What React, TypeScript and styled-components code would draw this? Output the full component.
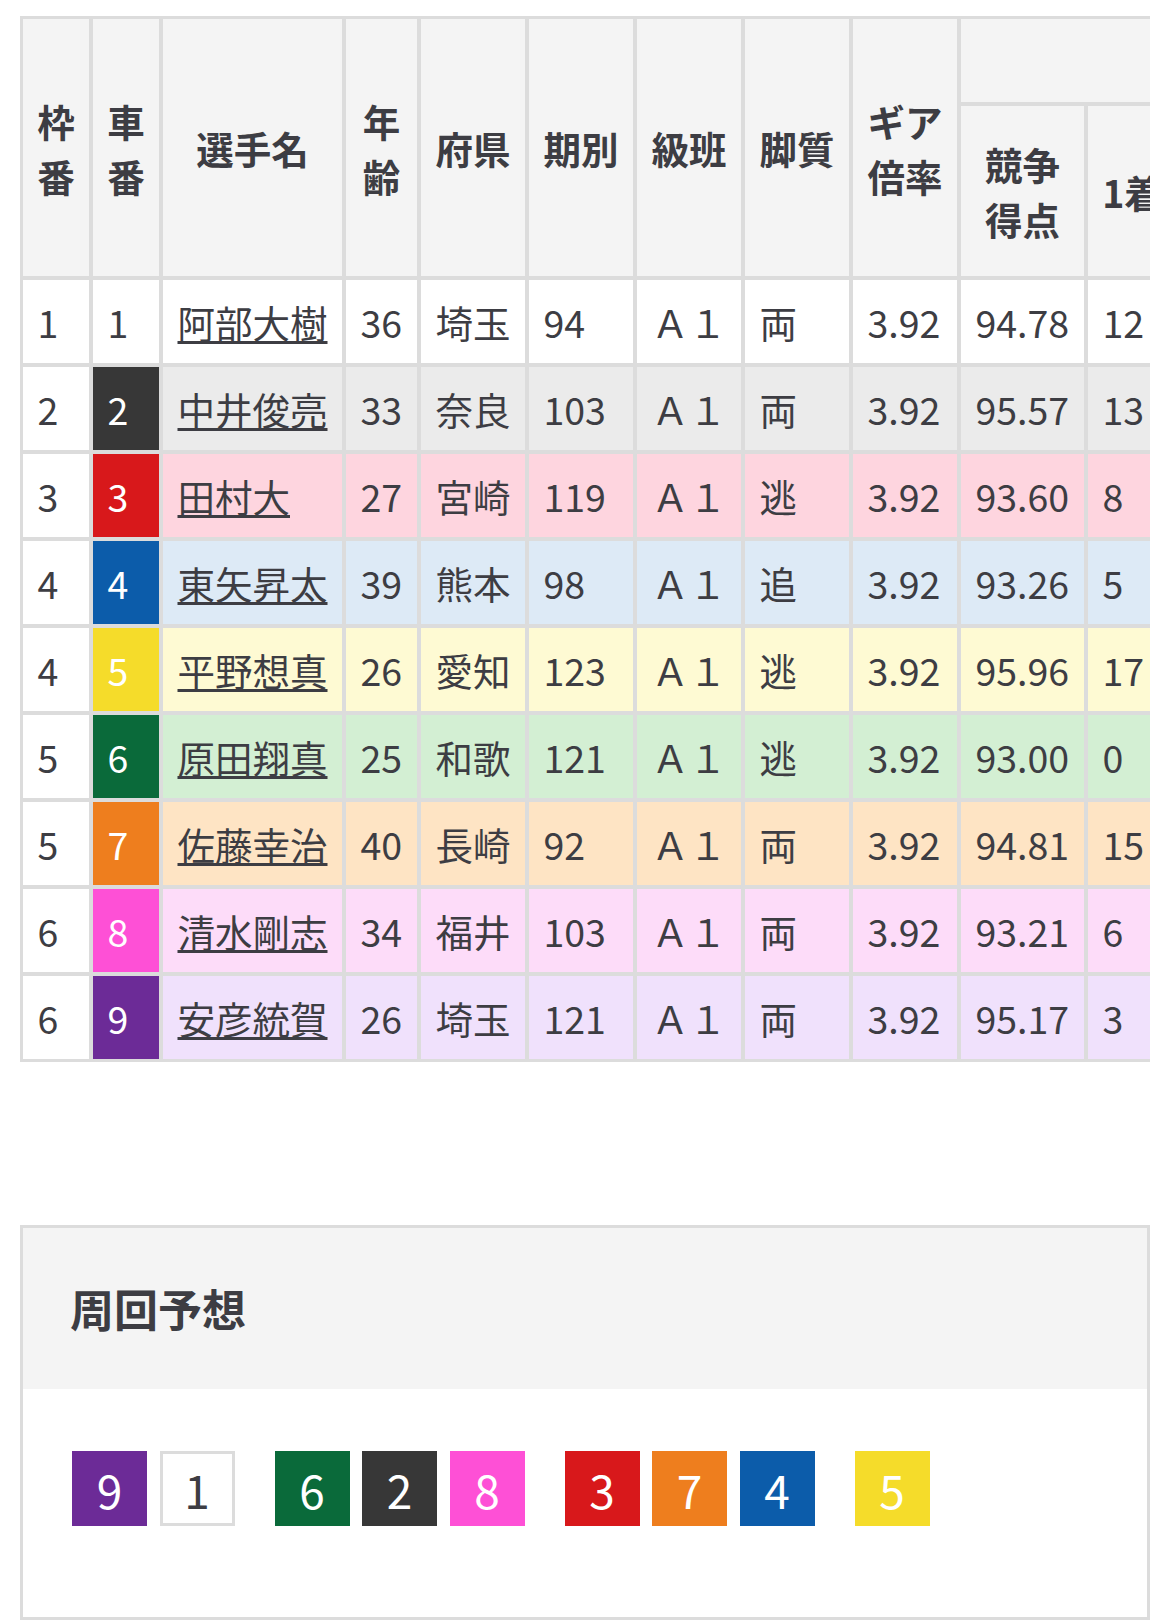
import styled, { createGlobalStyle } from "styled-components";

const GlobalStyle = createGlobalStyle`
  * {
    box-sizing: border-box;
  }

  body {
    margin: 0;
    background: #fff;
    color: #3d3d43;
    font-family: "Noto Sans CJK JP", "Noto Sans", sans-serif;
  }
`;

const LINE = "#dcdcdc";

const Page = styled.div`
  width: 1170px;
  padding: 16px 20px 0;
`;

const Scroller = styled.div`
  width: 1130px;
  overflow-x: auto;
  scrollbar-width: none;

  &::-webkit-scrollbar {
    display: none;
  }
`;

const Table = styled.table`
  border-collapse: separate;
  border-spacing: 0;
  table-layout: fixed;
  border-top: 3px solid ${LINE};
  border-left: 3px solid ${LINE};
  font-size: 37.5px;
  line-height: 55px;

  tbody tr:last-child td {
    border-bottom-width: 3px;
  }
`;

const HeadCell = styled.th<{ $h?: number }>`
  height: ${(p) => (p.$h ? `${p.$h}px` : "auto")};
  padding: 14px 14px;
  background: #f4f4f4;
  border-right: 4px solid ${LINE};
  border-bottom: 4px solid ${LINE};
  font-weight: 700;
  text-align: center;
  vertical-align: middle;
  white-space: nowrap;
`;

const Cell = styled.td<{ $bg: string }>`
  padding: 14px 14px 14px 14.5px;
  background: ${(p) => p.$bg};
  border-right: 4px solid ${LINE};
  border-bottom: 4px solid ${LINE};
  text-align: left;
  vertical-align: middle;
  white-space: nowrap;
`;

const CarCell = styled(Cell)<{ $fg: string }>`
  color: ${(p) => p.$fg};
`;

const Name = styled.a`
  color: inherit;
  text-decoration: underline;
  text-decoration-thickness: 3px;
  text-underline-offset: 3px;
`;

const Panel = styled.section`
  margin-top: 163px;
  border: 3px solid ${LINE};
`;

const PanelHead = styled.div`
  background: #f4f4f4;
  padding: 48px 47px;
`;

const PanelTitle = styled.h2`
  margin: 0;
  font-size: 44px;
  line-height: 65px;
  font-weight: 700;
`;

const PanelBody = styled.div`
  display: flex;
  align-items: center;
  gap: 40px;
  padding: 62px 49px 91px;
`;

const Group = styled.div`
  display: flex;
  gap: 12.5px;
`;

const Chip = styled.span<{ $bg: string; $fg: string; $outline?: boolean }>`
  display: flex;
  width: 75px;
  height: 75px;
  align-items: center;
  justify-content: center;
  background: ${(p) => p.$bg};
  color: ${(p) => p.$fg};
  border: 3px solid ${(p) => (p.$outline ? LINE : p.$bg)};
  font-size: 46px;
  line-height: 1;
`;

const cars: Record<number, { bg: string; fg: string; tint: string }> = {
  1: { bg: "#ffffff", fg: "#3d3d43", tint: "#ffffff" },
  2: { bg: "#373737", fg: "#ffffff", tint: "#ebebeb" },
  3: { bg: "#d8181b", fg: "#ffffff", tint: "#fed5df" },
  4: { bg: "#0c5caa", fg: "#ffffff", tint: "#ddeaf6" },
  5: { bg: "#f5dc2a", fg: "#ffffff", tint: "#fefad3" },
  6: { bg: "#0a6a3a", fg: "#ffffff", tint: "#d3efd3" },
  7: { bg: "#ee7e1e", fg: "#ffffff", tint: "#fee4c4" },
  8: { bg: "#fe50d6", fg: "#ffffff", tint: "#fddcf9" },
  9: { bg: "#6c2b97", fg: "#ffffff", tint: "#f0e1fc" },
};

const colWidths = [70, 70, 183, 75, 108, 108, 108, 108, 108, 127, 92, 92, 92, 92, 108, 108, 108];
const tableWidth = colWidths.reduce((a, b) => a + b, 3);

type Racer = {
  frame: number;
  car: number;
  name: string;
  age: number;
  pref: string;
  term: number;
  style: string;
  score: string;
  wins: number[];
  rates: string[];
};

const racers: Racer[] = [
  { frame: 1, car: 1, name: "阿部大樹", age: 36, pref: "埼玉", term: 94, style: "両", score: "94.78", wins: [12, 6, 3, 9], rates: ["40.0", "60.0", "70.0"] },
  { frame: 2, car: 2, name: "中井俊亮", age: 33, pref: "奈良", term: 103, style: "両", score: "95.57", wins: [13, 7, 4, 4], rates: ["46.4", "71.4", "85.7"] },
  { frame: 3, car: 3, name: "田村大", age: 27, pref: "宮崎", term: 119, style: "逃", score: "93.60", wins: [8, 5, 6, 11], rates: ["26.6", "43.3", "63.3"] },
  { frame: 4, car: 4, name: "東矢昇太", age: 39, pref: "熊本", term: 98, style: "追", score: "93.26", wins: [5, 9, 7, 8], rates: ["17.2", "48.2", "72.4"] },
  { frame: 4, car: 5, name: "平野想真", age: 26, pref: "愛知", term: 123, style: "逃", score: "95.96", wins: [17, 4, 2, 5], rates: ["60.7", "75.0", "82.1"] },
  { frame: 5, car: 6, name: "原田翔真", age: 25, pref: "和歌", term: 121, style: "逃", score: "93.00", wins: [0, 3, 5, 12], rates: ["0.0", "15.0", "40.0"] },
  { frame: 5, car: 7, name: "佐藤幸治", age: 40, pref: "長崎", term: 92, style: "両", score: "94.81", wins: [15, 6, 2, 6], rates: ["51.7", "72.4", "79.3"] },
  { frame: 6, car: 8, name: "清水剛志", age: 34, pref: "福井", term: 103, style: "両", score: "93.21", wins: [6, 8, 5, 10], rates: ["20.6", "48.2", "65.5"] },
  { frame: 6, car: 9, name: "安彦統賀", age: 26, pref: "埼玉", term: 121, style: "両", score: "95.17", wins: [3, 9, 8, 7], rates: ["11.1", "44.4", "74.0"] },
];

const lapGroups = [[9, 1], [6, 2, 8], [3, 7, 4], [5]];

function App() {
  return (
    <>
      <GlobalStyle />
      <Page>
        <Scroller>
          <Table style={{ width: tableWidth }}>
            <colgroup>
              {colWidths.map((w, i) => (
                <col key={i} style={{ width: w }} />
              ))}
            </colgroup>
            <thead>
              <tr>
                <HeadCell rowSpan={2}>枠<br />番</HeadCell>
                <HeadCell rowSpan={2}>車<br />番</HeadCell>
                <HeadCell rowSpan={2}>選手名</HeadCell>
                <HeadCell rowSpan={2}>年<br />齢</HeadCell>
                <HeadCell rowSpan={2}>府県</HeadCell>
                <HeadCell rowSpan={2}>期別</HeadCell>
                <HeadCell rowSpan={2}>級班</HeadCell>
                <HeadCell rowSpan={2}>脚質</HeadCell>
                <HeadCell rowSpan={2}>ギア<br />倍率</HeadCell>
                <HeadCell colSpan={8}>直近4ヶ月の成績</HeadCell>
              </tr>
              <tr>
                <HeadCell $h={174}>競争<br />得点</HeadCell>
                <HeadCell $h={174}>1着</HeadCell>
                <HeadCell $h={174}>2着</HeadCell>
                <HeadCell $h={174}>3着</HeadCell>
                <HeadCell $h={174}>着外</HeadCell>
                <HeadCell $h={174}>勝率</HeadCell>
                <HeadCell $h={174}>2連<br />対率</HeadCell>
                <HeadCell $h={174}>3連<br />対率</HeadCell>
              </tr>
            </thead>
            <tbody>
              {racers.map((r) => {
                const c = cars[r.car];
                return (
                  <tr key={r.car}>
                    <Cell $bg="#ffffff">{r.frame}</Cell>
                    <CarCell $bg={c.bg} $fg={c.fg}>{r.car}</CarCell>
                    <Cell $bg={c.tint}>
                      <Name href="#">{r.name}</Name>
                    </Cell>
                    <Cell $bg={c.tint}>{r.age}</Cell>
                    <Cell $bg={c.tint}>{r.pref}</Cell>
                    <Cell $bg={c.tint}>{r.term}</Cell>
                    <Cell $bg={c.tint}>Ａ１</Cell>
                    <Cell $bg={c.tint}>{r.style}</Cell>
                    <Cell $bg={c.tint}>3.92</Cell>
                    <Cell $bg={c.tint}>{r.score}</Cell>
                    {r.wins.map((w, i) => (
                      <Cell key={`w${i}`} $bg={c.tint}>{w}</Cell>
                    ))}
                    {r.rates.map((v, i) => (
                      <Cell key={`r${i}`} $bg={c.tint}>{v}</Cell>
                    ))}
                  </tr>
                );
              })}
            </tbody>
          </Table>
        </Scroller>

        <Panel>
          <PanelHead>
            <PanelTitle>周回予想</PanelTitle>
          </PanelHead>
          <PanelBody>
            {lapGroups.map((g, gi) => (
              <Group key={gi}>
                {g.map((n) => (
                  <Chip
                    key={n}
                    $bg={cars[n].bg}
                    $fg={cars[n].fg}
                    $outline={n === 1}
                  >
                    {n}
                  </Chip>
                ))}
              </Group>
            ))}
          </PanelBody>
        </Panel>
      </Page>
    </>
  );
}

export default App;
